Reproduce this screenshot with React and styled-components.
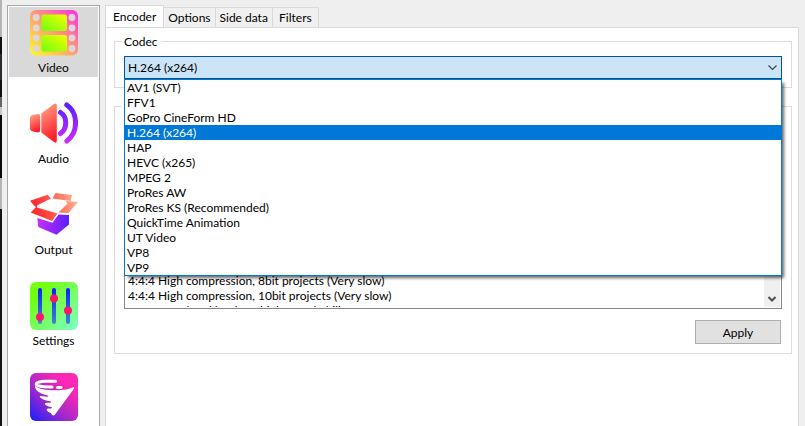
import React, { useState } from "react"
import styled, { createGlobalStyle } from "styled-components"

const GlobalStyle = createGlobalStyle`
  * {
    box-sizing: border-box;
  }

  body {
    margin: 0;
    background: #efefef;
    color: #000;
    font: 12px/15px Lato, "Noto Sans", sans-serif;
    overflow: hidden;
  }

  button, select {
    font: inherit;
    color: inherit;
  }
`

const Window = styled.div`
  display: flex;
  height: 100vh;
`

const Edge = styled.div`
  flex: none;
  width: 2px;
  margin-right: 5px;
  background: linear-gradient(
    #b4b4b4 37px, #101014 37px 54px, #2c2c30 54px 80px, #101014 80px 97px,
    #66666a 97px 107px, #c8c8c8 107px 115px, #08080a 115px 178px,
    #b4b4b4 178px 209px, #141418 209px
  );
`

const Sidebar = styled.nav`
  flex: none;
  display: flex;
  flex-direction: column;
  gap: 21px;
  width: 93px;
  margin-top: 5px;
  padding: 1px;
  overflow: hidden;
  background: #fff;
  border: 1px solid #a5a7ac;
  border-bottom: 0;
`

const NavButton = styled.button`
  flex: none;
  display: flex;
  flex-direction: column;
  align-items: center;
  height: 70px;
  padding: 2px 0 0;
  border: 0;
  line-height: 22px;
  background: ${props => (props.$active ? "#d9d9d9" : "transparent")};

  svg {
    flex: none;
    display: block;
  }
`

const Main = styled.main`
  flex: 1;
  min-width: 0;
  display: flex;
  flex-direction: column;
  padding: 5px 6px 0 5px;
`

const TabBar = styled.div`
  display: flex;
  align-items: flex-end;
  height: 22px;
`

const Tab = styled.button`
  min-width: 46px;
  height: ${props => (props.$active ? 23 : 20)}px;
  margin-bottom: ${props => (props.$active ? -1 : 0)}px;
  padding: ${props => (props.$active ? "0 7px 2px" : "0 4px")};
  border: 1px solid #d9d9d9;
  border-bottom: 0;
  border-left-width: ${props => (props.$active ? 1 : 0)}px;
  background: ${props => (props.$active ? "#fff" : "#f0f0f0")};
  white-space: nowrap;
`

const Page = styled.div`
  flex: 1;
  padding: 6px 6px 0 8px;
  background: #fff;
  border: 1px solid #dadada;
  border-bottom: 0;
`

const Group = styled.fieldset`
  min-width: 0;
  margin: 0 0 11px;
  padding: 7px 9px 8px;
  border: 1px solid #dcdcdc;
`

const Legend = styled.legend`
  min-width: 40px;
  height: 15px;
  margin-left: -3px;
  padding: 0 3px;
`

const Combo = styled.div`
  position: relative;

  > svg {
    position: absolute;
    top: 9px;
    right: 5px;
    pointer-events: none;
  }
`

const Select = styled.select`
  display: block;
  width: 100%;
  height: 23px;
  padding: 0 3px;
  appearance: none;
  outline: 0;
  background: #cce4f7;
  border: 1px solid #005499;
  border-radius: 0;
`

const Popup = styled.ul`
  position: absolute;
  z-index: 1;
  top: 100%;
  left: 0;
  right: 0;
  margin: 0;
  padding: 0;
  list-style: none;
  background: #fff;
  border: 1px solid #0078d7;
  box-shadow: 3px 3px 3px -1px rgba(0, 0, 0, 0.6);
`

const Option = styled.li`
  height: 15px;
  padding: 0 2px;
  white-space: nowrap;
  background: ${props => (props.$selected ? "#0078d7" : "transparent")};
  color: ${props => (props.$selected ? "#fff" : "#000")};
`

const PresetBox = styled.div`
  display: flex;
  height: 188px;
  padding: 1px;
  border: 1px solid #828790;
`

const PresetList = styled.ul`
  flex: 1;
  margin: 0;
  padding: 150px 0 0;
  list-style: none;
  overflow: hidden;
`

const ScrollBar = styled.div`
  display: flex;
  align-items: flex-end;
  justify-content: center;
  width: 16px;
  padding-bottom: 4px;
  background: #f0f0f0;
`

const Actions = styled.div`
  display: flex;
  justify-content: flex-end;
  padding: 11px 1px 1px;
`

const PushButton = styled.button`
  width: 86px;
  height: 24px;
  padding: 0;
  background: #e1e1e1;
  border: 1px solid #adadad;
`

const VideoIcon = () => (
  <svg width="48" height="48" viewBox="0 0 48 48">
    <defs>
      <linearGradient id="film" x1="0" y1="1" x2="1" y2="0">
        <stop offset="0" stopColor="#fcff1c" />
        <stop offset="0.5" stopColor="#ff9c78" />
        <stop offset="1" stopColor="#ff2be6" />
      </linearGradient>
      <linearGradient id="frame" x1="0" y1="1" x2="1" y2="0">
        <stop offset="0" stopColor="#6cff10" />
        <stop offset="1" stopColor="#f4ff00" />
      </linearGradient>
    </defs>
    <rect y="1" width="48" height="45.5" rx="6" fill="url(#film)" />
    {[8.5, 19, 29, 39.5].map(cy => (
      <g key={cy} fill="#d9d9d9">
        <circle cx="6.2" cy={cy} r="3.4" />
        <circle cx="42" cy={cy} r="3.4" />
      </g>
    ))}
    <rect x="11.5" y="5.5" width="25.5" height="16.5" rx="2.5" fill="url(#frame)" />
    <rect x="11.5" y="26" width="25.5" height="16.5" rx="2.5" fill="url(#frame)" />
  </svg>
)

const AudioIcon = () => (
  <svg width="48" height="48" viewBox="0 0 48 48">
    <defs>
      <linearGradient id="horn" x1="0" y1="0" x2="0.3" y2="1">
        <stop offset="0" stopColor="#ffae8c" />
        <stop offset="1" stopColor="#ff1f2c" />
      </linearGradient>
      <linearGradient id="wave" gradientUnits="userSpaceOnUse" x1="0" y1="4" x2="0" y2="44">
        <stop offset="0" stopColor="#5a20ff" />
        <stop offset="1" stopColor="#d42cff" />
      </linearGradient>
    </defs>
    <path d="M3 14.8 L8 14 Q10.2 14 10.2 16 V30.5 Q10.2 32.5 8 32.5 L3 31.5 Q0 31 0 28 V18 Q0 15.5 3 14.8Z" fill="url(#horn)" />
    <path d="M11.3 13.5 L24 4 Q26.8 2.5 26.8 5.5 V40.5 Q26.8 44 24 42 L11.3 32.5Z" fill="url(#horn)" />
    <g fill="none" stroke="url(#wave)" strokeLinecap="round">
      <path d="M30.5 12.5 C37.5 17 37.5 28.5 30.5 33.5" strokeWidth="5" />
      <path d="M36.8 5 C48.5 13 48.5 32.5 36.8 41" strokeWidth="5" />
    </g>
  </svg>
)

const OutputIcon = () => (
  <svg width="48" height="48" viewBox="0 0 48 48">
    <defs>
      <linearGradient id="flaps" gradientUnits="userSpaceOnUse" x1="8" y1="24" x2="46" y2="12">
        <stop offset="0" stopColor="#ff2c30" />
        <stop offset="0.5" stopColor="#ff6458" />
        <stop offset="1" stopColor="#ffb08c" />
      </linearGradient>
      <linearGradient id="box" x1="0" y1="0" x2="1" y2="0">
        <stop offset="0" stopColor="#c82cff" />
        <stop offset="1" stopColor="#5a20ff" />
      </linearGradient>
    </defs>
    <path d="M7.3 27 L22.5 31.8 L28.5 23.5 L39 24 V33.5 L26.5 43.7 L8.3 36Z" fill="url(#box)" />
    <g fill="url(#flaps)">
      <path d="M0 9.7 L17.6 3.7 L21 7.5 L7 14.5 V16.5 L27.5 22.5 L22 30 L0.7 21.5 L6 16 L4 14.5Z" />
      <path d="M25.5 2 L42 4 L40.5 10 L22.5 7.5Z" />
      <path d="M35.5 10 L48 11 L38.5 22 L28.5 21.5 L37.5 12.5Z" />
    </g>
  </svg>
)

const SettingsIcon = () => (
  <svg width="48" height="48" viewBox="0 0 48 48">
    <defs>
      <linearGradient id="panel" x1="0.2" y1="0.2" x2="1" y2="1">
        <stop offset="0" stopColor="#72ff12" />
        <stop offset="1" stopColor="#7cffc8" />
      </linearGradient>
      <linearGradient id="track" x1="0" y1="0" x2="0" y2="1">
        <stop offset="0" stopColor="#0822ff" />
        <stop offset="1" stopColor="#3c88cc" />
      </linearGradient>
    </defs>
    <rect width="48" height="48" rx="6" fill="url(#panel)" />
    {[[10, 35], [24, 16.5], [38, 28.5]].map(([cx, cy]) => (
      <g key={cx}>
        <rect x={cx - 2} y="6" width="4" height="36" rx="2" fill="url(#track)" />
        <circle cx={cx} cy={cy} r="4" fill="#ff146c" />
      </g>
    ))}
  </svg>
)

const TornadoIcon = () => (
  <svg width="48" height="48" viewBox="0 0 48 48">
    <defs>
      <linearGradient id="storm" x1="0" y1="1" x2="0.75" y2="0.2">
        <stop offset="0" stopColor="#1420ff" />
        <stop offset="0.5" stopColor="#a028cc" />
        <stop offset="1" stopColor="#ff28b4" />
      </linearGradient>
    </defs>
    <rect width="48" height="48" rx="6" fill="url(#storm)" />
    <path
      d="M5 13 C9 16 16 17.3 25 17.3 C34 17.3 40 16 43.5 14 C44.5 14 44 15.5 43 17 L25 41.5 C23.5 43.5 21.5 42 21 40 C17 39 15.5 36 18 35.5 L21 35.5 C22.5 35.2 22.3 34.3 21 34 C15 33 13.5 30.5 16.500 29.800 L20 29.800 C21.500 29.500 21.300 28.600 20 28.300 C12 27 8 23.500 10.500 23 L17 23.800 C19 23.800 19 22.800 17 22.300 C9 20.500 5 17 5 13Z"
      fill="#fff"
    />
    <path d="M25.5 8.3 H15 C4.5 9 4.500 12 9 13 C14 14.200 18 14 22 14" fill="none" stroke="#fff" strokeWidth="3" strokeLinecap="round" />
    <path d="M27.5 14.5 H31" stroke="#fff" strokeWidth="3" strokeLinecap="round" />
  </svg>
)

const pages = [
  { label: "Video", Icon: VideoIcon },
  { label: "Audio", Icon: AudioIcon },
  { label: "Output", Icon: OutputIcon },
  { label: "Settings", Icon: SettingsIcon },
  { label: "", Icon: TornadoIcon },
]

const tabs = ["Encoder", "Options", "Side data", "Filters"]

const codecs = [
  "AV1 (SVT)",
  "FFV1",
  "GoPro CineForm HD",
  "H.264 (x264)",
  "HAP",
  "HEVC (x265)",
  "MPEG 2",
  "ProRes AW",
  "ProRes KS (Recommended)",
  "QuickTime Animation",
  "UT Video",
  "VP8",
  "VP9",
]

const presets = [
  "4:4:4 High compression, 8bit projects (Very slow)",
  "4:4:4 High compression, 10bit projects (Very slow)",
  "4:4:4 Broad and lossless, high 8 seekability",
]

function App() {
  const [page, setPage] = useState(0)
  const [tab, setTab] = useState("Encoder")
  const [codec, setCodec] = useState("H.264 (x264)")

  return (
    <Window>
      <GlobalStyle />
      <Edge />
      <Sidebar>
        {pages.map(({ label, Icon }, i) => (
          <NavButton
            key={i}
            $active={page === i}
            aria-label={label || "About"}
            onClick={() => setPage(i)}
          >
            <Icon />
            {label}
          </NavButton>
        ))}
      </Sidebar>
      <Main>
        <TabBar role="tablist">
          {tabs.map(name => (
            <Tab
              key={name}
              role="tab"
              aria-selected={tab === name}
              $active={tab === name}
              onClick={() => setTab(name)}
            >
              {name}
            </Tab>
          ))}
        </TabBar>
        <Page>
          <Group>
            <Legend>
              <label htmlFor="codec">Codec</label>
            </Legend>
            <Combo>
              <Select id="codec" value={codec} onChange={e => setCodec(e.target.value)}>
                {codecs.map(name => (
                  <option key={name}>{name}</option>
                ))}
              </Select>
              <svg width="9" height="6" viewBox="0 0 9 6">
                <path d="M0.5 0.5 L4.5 4.5 L8.5 0.5" fill="none" stroke="#444" strokeWidth="1.2" />
              </svg>
              <Popup role="listbox" aria-label="Codec">
                {codecs.map(name => (
                  <Option
                    key={name}
                    role="option"
                    aria-selected={codec === name}
                    $selected={codec === name}
                    onClick={() => setCodec(name)}
                  >
                    {name}
                  </Option>
                ))}
              </Popup>
            </Combo>
          </Group>
          <Group>
            <Legend aria-label="Presets" />
            <PresetBox>
              <PresetList role="listbox" aria-label="Presets">
                {presets.map(name => (
                  <Option key={name} role="option">
                    {name}
                  </Option>
                ))}
              </PresetList>
              <ScrollBar>
                <svg width="8" height="7" viewBox="0 0 8 7">
                  <path d="M0.5 1 L4 4.5 L7.5 1" fill="none" stroke="#505050" strokeWidth="2" />
                </svg>
              </ScrollBar>
            </PresetBox>
            <Actions>
              <PushButton>Apply</PushButton>
            </Actions>
          </Group>
        </Page>
      </Main>
    </Window>
  )
}

export default App
